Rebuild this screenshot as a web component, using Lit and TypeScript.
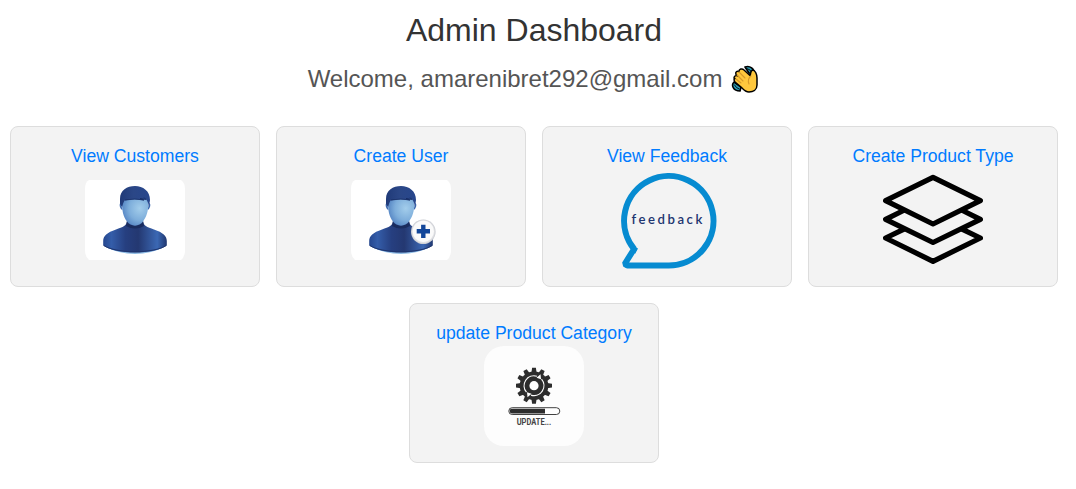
import { LitElement, html, svg, css } from "lit";
import { customElement, property } from "lit/decorators.js";

const person = svg`
  <defs>
    <radialGradient id="face" cx=".68" cy=".4" r=".75">
      <stop offset="0" stop-color="#a3cdeb"/><stop offset=".55" stop-color="#7eaedb"/><stop offset="1" stop-color="#4d7dbf"/>
    </radialGradient>
    <linearGradient id="hair" x1="0" y1="0" x2="1" y2="0">
      <stop offset="0" stop-color="#203a78"/><stop offset=".45" stop-color="#2b4787"/><stop offset="1" stop-color="#27468c"/>
    </linearGradient>
    <linearGradient id="body" x1="0" y1="0" x2="1" y2="0">
      <stop offset="0" stop-color="#25478f"/><stop offset=".13" stop-color="#345da9"/><stop offset=".35" stop-color="#263f80"/>
      <stop offset=".55" stop-color="#243871"/><stop offset=".85" stop-color="#3b68b4"/><stop offset="1" stop-color="#20376f"/>
    </linearGradient>
  </defs>
  <path class="white" d="M4 10H96Q100 13 100 19V82Q99 88 96 90H4Q0 87 0 80V19Q0 12 4 10Z"/>
  <path d="M21 77Q34 84 50 84T79 77Q66 80 50 80T21 77Z" fill="#8dbbe4"/>
  <path d="M42 50C42 56 38 57 31 59.500C22 62.500 18.200 66 18.200 71V75.500C24 80 37 82.500 50 82.500S76 80 81.800 75.500V71C81.800 66 78 62.500 69 59.500C62 57 58 56 58 50Z" fill="url(#body)"/>
  <path d="M42 51C43 57 57 57 58 51L59 56Q50 61 41 56Z" fill="#1a2c5e"/>
  <path d="M18.800 75.500C25 79.500 37 81.700 50 81.700S75 79.500 81.200 75.500" fill="none" stroke="#1f356d" stroke-width="1"/>
  <path d="M35.800 33C33.800 33 34.500 39 37.500 40M64.200 33C66.200 33 65.500 39 62.500 40" fill="#3c69af"/>
  <path d="M37 28Q50 25 63 30C64 42 61 47 58 51.500C54 57 46 57 42 51.500C38.500 47 36.500 41 37 28Z" fill="url(#face)"/>
  <path d="M35 34V29C35 20 42 16 50 16S65 21 65 30L64 37Q63 31 61 29.500L57 29.500L59 30.500Q50 28.500 39.500 30.500Q38 33 37 37Z" fill="url(#hair)"/>
  <path d="M40 30Q50 28 59 30L55 28.500L61 29.500L59 27.500" fill="none" stroke="#172c63" stroke-width=".8"/>`;

const plus = svg`
  <defs><radialGradient id="badge"><stop offset=".7" stop-color="#f7f7f8"/><stop offset=".9" stop-color="#dedfe2"/><stop offset="1" stop-color="#c6c9d0"/></radialGradient></defs>
  <circle cx="72.300" cy="61.700" r="12.300" fill="url(#badge)"/>
  <circle cx="72.300" cy="61.300" r="10.600" fill="#fafafa"/>
  <path d="M72.300 54.700V68M65.700 61.300H79" fill="none" stroke="#124699" stroke-width="4.400"/>`;

const feedback = svg`
  <path d="M51.500 95.500A44.700 44.700 0 1 0 17.400 79L8 94L10.500 95.500Z" fill="none" stroke="#068bd1" stroke-width="6" stroke-linejoin="bevel" transform="translate(-.3 0)"/>
  <path d="M16 76L21 78.500L18 84Z" fill="#068bd1"/>
  <text x="14.600" y="54" class="feedback">feedback</text>`;

const layers = svg`
  <g fill="none" stroke="#000" stroke-width="5.200" stroke-linejoin="round" stroke-linecap="round">
    <path d="M50 7.300L97.400 30.700L50 54L2.600 30.700Z"/>
    <path d="M20.500 40.500L2.600 49.300L50 72.500L97.400 49.300L79.500 40.500"/>
    <path d="M20.500 59.300L2.600 68L50 91.300L97.400 68L79.500 59.300"/>
  </g>`;

const update = svg`
  <rect width="100" height="100" rx="20" fill="#fdfdfd"/>
  <g transform="translate(50 39.700)" fill="#2d2d2d">
    ${Array.from({ length: 12 }, (_, i) => svg`<path d="M-2.600-13L-1.900-18H1.900L2.600-13Z" transform="rotate(${i * 30})"/>`)}
    <circle r="14.300"/>
    <circle r="4.600" fill="#fdfdfd"/>
    <g fill="none" stroke="#fdfdfd" stroke-width="1.200">
      <path d="M-7.500 6.500A9.900 9.900 0 0 1 3-9.400"/>
      <path d="M7.500-6.500A9.900 9.900 0 0 1-3 9.400"/>
    </g>
    <path d="M2.500-8L6.500-11.500L7-6.500ZM-2.500 8L-6.500 11.500L-7 6.500Z" fill="#fdfdfd"/>
  </g>
  <rect x="24.800" y="61.700" width="51" height="6.800" rx="3.400" fill="#fff" stroke="#2d2d2d" stroke-width=".9"/>
  <path d="M28 62.700H61V67.500H28A2.400 2.400 0 0 1 28 62.700Z" fill="#2d2d2d"/>
  <text x="32.700" y="78.500" textLength="34.500" lengthAdjust="spacingAndGlyphs" class="update">UPDATE...</text>`;

const pictures: Record<string, unknown> = {
  customers: person,
  create: [person, plus],
  feedback,
  layers,
  update,
};

@customElement("dashboard-card")
class DashboardCard extends LitElement {
  @property() label = "";
  @property() picture = "";

  static styles = css`
    :host {
      box-sizing: border-box;
      width: 250px;
      padding: 16px 0;
      border: 1px solid #ddd;
      border-radius: 8px;
      background: #f3f3f3;
      display: flex;
      flex-direction: column;
      align-items: center;
    }
    .link {
      color: #007bff;
      font-size: 17.6px;
      line-height: 26.6px;
      text-decoration: none;
      white-space: nowrap;
    }
    .picture { width: 100px; height: 100px; display: block; }
    .white { fill: #fff; }
    .feedback { font: 600 13.2px Lato, sans-serif; letter-spacing: 2.5px; fill: #1d3570; }
    .update { font: 700 8.3px Roboto, sans-serif; fill: #444; }
  `;

  render() {
    return html`
      <a class="link">${this.label}</a>
      <svg class="picture" viewBox="0 0 100 100">${pictures[this.picture]}</svg>
    `;
  }
}

@customElement("app-root")
class AppRoot extends LitElement {
  static styles = css`
    :host {
      display: block;
      box-sizing: border-box;
      width: 1068px;
      padding: 10.200px 10px 0;
      font-family: "Liberation Sans", Arial, sans-serif;
      text-align: center;
    }
    .title {
      margin: 0;
      font-size: 32px;
      font-weight: 400;
      line-height: 40px;
      color: #333;
    }
    .welcome {
      margin: 11px 0 0;
      display: flex;
      justify-content: center;
      align-items: center;
      gap: 9px;
      font-size: 24px;
      line-height: 36px;
      color: #555;
    }
    .wave { width: 28px; height: 28px; margin-right: 1px; }
    .cards {
      margin-top: 29px;
      display: flex;
      flex-wrap: wrap;
      justify-content: center;
      gap: 16px;
    }
  `;

  render() {
    return html`
      <h1 class="title">Admin Dashboard</h1>
      <p class="welcome">
        <span>Welcome, amarenibret292@gmail.com</span>
        <svg class="wave" viewBox="0 0 28 28" stroke-linejoin="round" stroke-linecap="round">
          <path d="M14 2C19 0 23.500 4 23.500 9L18 8ZM3 17C0 20 2 26 9 26L10 22Z" fill="#2a9fba" stroke="#000" stroke-width="1.600"/>
          <path d="M16 3.500Q19.500 4 21 8M3.500 20Q5 23 8 24" fill="none" stroke="#000" stroke-width=".9"/>
          <path d="M3 13C3 11 5 10 6.500 11L5 9.500C4 7 6 5.500 8 6.500C8 4 11 3 13 5L19 10.500C20 9 19 6 21.500 5C24 5 26 9 26 13V20C26 25 22 27 18 27C14 27 12 24 10 22L4 17C2.500 15 3 14 4 13.500Z" fill="#ffc83d" stroke="#000" stroke-width="1.500"/>
          <path d="M8 7L14 13M6 10L12 16M5 14L10 18M20 11Q16 14 18 19" fill="none" stroke="#d69a2b" stroke-width="1.100"/>
        </svg>
      </p>
      <div class="cards">
        <dashboard-card label="View Customers" picture="customers"></dashboard-card>
        <dashboard-card label="Create User" picture="create"></dashboard-card>
        <dashboard-card label="View Feedback" picture="feedback"></dashboard-card>
        <dashboard-card label="Create Product Type" picture="layers"></dashboard-card>
        <dashboard-card label="update Product Category" picture="update"></dashboard-card>
      </div>
    `;
  }
}
